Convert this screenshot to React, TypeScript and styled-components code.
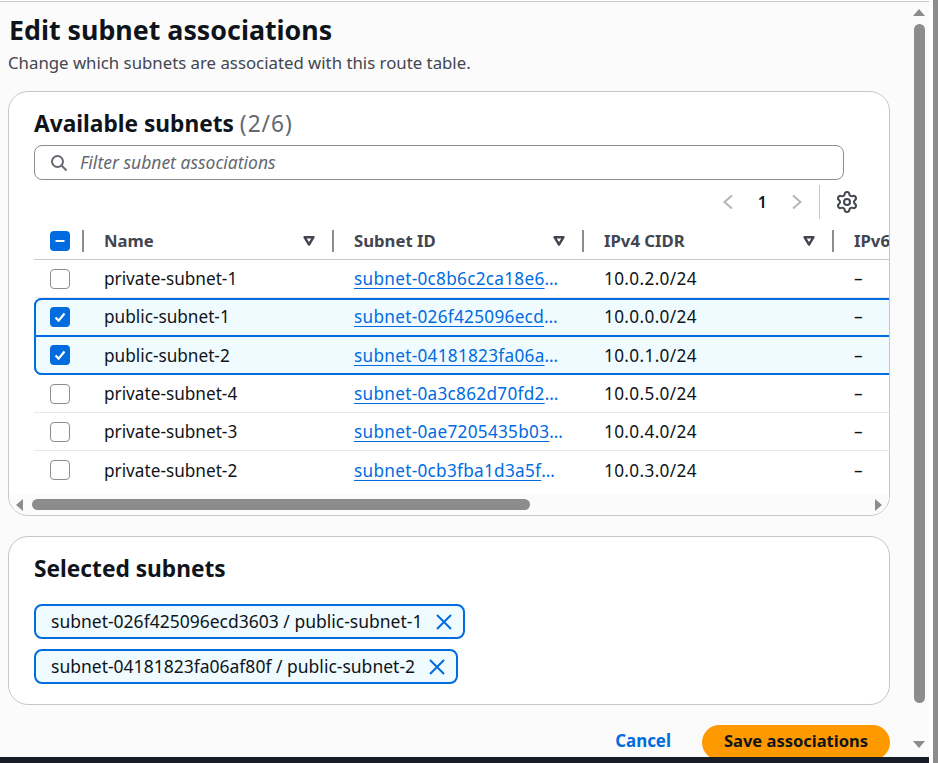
import styled, { createGlobalStyle } from 'styled-components';
import { Settings } from 'lucide-react';

const SUBNETS = [
  { name: 'private-subnet-1', id: 'subnet-0c8b6c2ca18e6d5f1', cidr: '10.0.2.0/24' },
  { name: 'public-subnet-1', id: 'subnet-026f425096ecd3603', cidr: '10.0.0.0/24', selected: true, edge: 'top' },
  { name: 'public-subnet-2', id: 'subnet-04181823fa06af80f', cidr: '10.0.1.0/24', selected: true, edge: 'bottom' },
  { name: 'private-subnet-4', id: 'subnet-0a3c862d70fd2b9e4', cidr: '10.0.5.0/24' },
  { name: 'private-subnet-3', id: 'subnet-0ae7205435b03c1a7', cidr: '10.0.4.0/24' },
  { name: 'private-subnet-2', id: 'subnet-0cb3fba1d3a5f7e82', cidr: '10.0.3.0/24', last: true },
];

const COLUMNS = ['Name', 'Subnet ID', 'IPv4 CIDR', 'IPv6'];

const TOKENS = [
  'subnet-026f425096ecd3603 / public-subnet-1',
  'subnet-04181823fa06af80f / public-subnet-2',
];

function SortIcon() {
  return (
    <svg width="14" height="12" viewBox="0 0 14 12">
      <path d="M2.5 2.2h9L7 9.5z" fill="none" stroke="#424650" strokeWidth="2.4" strokeLinejoin="round" />
    </svg>
  );
}

function Chevron({ flip }: { flip?: boolean }) {
  return (
    <svg width="12" height="16" viewBox="0 0 12 16">
      <path d={flip ? 'M2 1.5 9.5 8 2 14.5' : 'M10 1.5 2.5 8 10 14.5'} fill="none" stroke="#b4b4bb" strokeWidth="2" />
    </svg>
  );
}

function Check({ indeterminate, checked }: { indeterminate?: boolean; checked?: boolean }) {
  return (
    <CheckBox $on={checked || indeterminate}>
      {checked && (
        <svg width="14" height="14" viewBox="0 0 14 14">
          <path d="M2.5 7.5 5.6 10.6 11.5 3.5" fill="none" stroke="#fff" strokeWidth="2.2" />
        </svg>
      )}
      {indeterminate && (
        <svg width="14" height="14" viewBox="0 0 14 14">
          <path d="M2.5 7h9" fill="none" stroke="#fff" strokeWidth="2" />
        </svg>
      )}
    </CheckBox>
  );
}

function App() {
  return (
    <Window>
      <GlobalStyle />
      <Main>
        <ScrollArea>
          <Content>
            <Title>Edit subnet associations</Title>
            <Subtitle>Change which subnets are associated with this route table.</Subtitle>

            <Card>
              <CardHead>
                <CardTitle>
                  Available subnets <Count>(2/6)</Count>
                </CardTitle>
                <Filter>
                  <svg width="18" height="18" viewBox="0 0 18 18">
                    <circle cx="7.5" cy="7.5" r="5.5" fill="none" stroke="#656871" strokeWidth="2" />
                    <path d="m11.5 11.5 5 5" fill="none" stroke="#656871" strokeWidth="2" />
                  </svg>
                  <FilterText>Filter subnet associations</FilterText>
                </Filter>
                <Tools>
                  <Pager>
                    <Chevron />
                    <PageNumber>1</PageNumber>
                    <Chevron flip />
                  </Pager>
                  <ToolDivider />
                  <Settings size={24} color="#424650" strokeWidth={2} />
                </Tools>
              </CardHead>

              <Table>
                <HeaderRow>
                  <CheckCell>
                    <Check indeterminate />
                    <HeadDivider />
                  </CheckCell>
                  {COLUMNS.map((col, i) => (
                    <HeadCell key={col}>
                      <HeadLabel>{col}</HeadLabel>
                      {i < 3 && <SortIcon />}
                      {i < 3 && <HeadDivider />}
                    </HeadCell>
                  ))}
                </HeaderRow>
                {SUBNETS.map((row) => (
                  <Row key={row.name} $selected={row.selected} $edge={row.edge} $last={row.last}>
                    <CheckCell>
                      <Check checked={row.selected} />
                    </CheckCell>
                    <Cell>{row.name}</Cell>
                    <IdCell>
                      <IdLink>{row.id}</IdLink>
                    </IdCell>
                    <CidrCell>{row.cidr}</CidrCell>
                    <Cell>–</Cell>
                  </Row>
                ))}
              </Table>

              <HScroll>
                <ArrowLeft />
                <HThumb />
                <ArrowRight />
              </HScroll>
            </Card>

            <SelectedCard>
              <CardTitle>Selected subnets</CardTitle>
              <TokenList>
                {TOKENS.map((token) => (
                  <Token key={token}>
                    <TokenText>{token}</TokenText>
                    <svg width="18" height="18" viewBox="0 0 18 18">
                      <path d="m2 2 14 14M16 2 2 16" fill="none" stroke="#006ce0" strokeWidth="2" />
                    </svg>
                  </Token>
                ))}
              </TokenList>
            </SelectedCard>

            <Actions>
              <Cancel>Cancel</Cancel>
              <Save>Save associations</Save>
            </Actions>
          </Content>
          <VScroll>
            <ArrowUp />
            <VThumb />
            <ArrowDown />
          </VScroll>
        </ScrollArea>
        <DarkBar />
      </Main>
      <Gutter />
      <Strip />
    </Window>
  );
}

export default App;

const GlobalStyle = createGlobalStyle`
  html, body {
    margin: 0;
    padding: 0;
    background: #fff;
    overflow: hidden;
  }
  * {
    box-sizing: border-box;
  }
`

const Window = styled.div`
  display: flex;
  width: 938px;
  height: 763px;
  overflow: hidden;
  font-family: "Noto Sans", "Open Sans", Arial, sans-serif;
  color: #0f141a;
`

const Main = styled.div`
  width: 929px;
  margin-top: 1px;
  display: flex;
  flex-direction: column;
  border-top: 1px solid #c6c6cd;
  background: #fbfbfb;
`

const ScrollArea = styled.div`
  flex: 1;
  min-height: 0;
  display: flex;
  overflow: hidden;
`

const Content = styled.div`
  width: 909px;
  padding: 0 19px 0 8px;
`

const Title = styled.h1`
  margin: 11px 0 0 1px;
  font-size: 26.8px;
  line-height: 34px;
  font-weight: 700;
`

const Subtitle = styled.p`
  margin: 4px 0 0;
  font-size: 16.8px;
  line-height: 24px;
  color: #424650;
`

const Card = styled.section`
  margin-top: 16px;
  height: 425px;
  background: #fff;
  border: 1px solid #c6c6cd;
  border-radius: 20px;
  overflow: hidden;
`

const CardHead = styled.div`
  padding: 16px 45px 0 25px;
`

const CardTitle = styled.h2`
  margin: 0;
  font-size: 22.7px;
  line-height: 32px;
  font-weight: 700;
`

const Count = styled.span`
  font-weight: 400;
  letter-spacing: 1px;
  color: #656871;
`

const Filter = styled.div`
  margin-top: 5px;
  height: 35px;
  display: flex;
  align-items: center;
  gap: 12px;
  padding: 0 0 0 15px;
  border: 1px solid #8c8c94;
  border-radius: 8px;
  background: #fff;
`

const FilterText = styled.span`
  font-size: 17.5px;
  font-style: italic;
  color: #656871;
  margin-bottom: 2px;
`

const Tools = styled.div`
  height: 42px;
  margin-right: -15px;
  display: flex;
  align-items: center;
  justify-content: flex-end;
  padding-top: 1px;
`

const Pager = styled.div`
  display: flex;
  align-items: center;
  gap: 24px;
  margin-right: 16px;
`

const PageNumber = styled.span`
  font-size: 16px;
  font-weight: 600;
`

const ToolDivider = styled.div`
  width: 1px;
  height: 34px;
  margin-right: 15px;
  background: #c6c6cd;
`

const Table = styled.div`
  padding: 0 0 6px 25px;
  overflow: hidden;
`

const HeaderRow = styled.div`
  display: grid;
  grid-template-columns: 50px repeat(4, 250px);
  height: 38px;
  align-items: center;
  border-bottom: 1px solid #c6c6cd;
`

const Row = styled.div<{ $selected?: boolean; $edge?: string; $last?: boolean }>`
  display: grid;
  grid-template-columns: 50px repeat(4, 250px);
  height: ${(p) => (p.$edge === 'bottom' ? '39px' : '38px')};
  align-items: center;
  font-size: 17.2px;
  border-bottom: ${(p) => (p.$last || p.$selected ? 'none' : '1px solid #e8e8ec')};
  ${(p) => p.$selected && 'background: #f0fbff; margin-right: -4px; padding-bottom: 1px;'}
  ${(p) =>
    p.$edge === 'top' &&
    `
    border-top-left-radius: 8px;
    box-shadow: inset 0 2px 0 #006ce0, inset 2px 0 0 #006ce0, inset 0 -1px 0 #006ce0;
  `}
  ${(p) =>
    p.$edge === 'bottom' &&
    `
    border-bottom-left-radius: 8px;
    box-shadow: inset 0 -2px 0 #006ce0, inset 2px 0 0 #006ce0, inset 0 1px 0 #006ce0;
  `}
`

const CheckCell = styled.div`
  position: relative;
  display: flex;
  align-items: center;
  height: 100%;
  padding-left: 16px;
`

const CheckBox = styled.span<{ $on?: boolean }>`
  width: 20px;
  height: 20px;
  display: flex;
  align-items: center;
  justify-content: center;
  border-radius: 4px;
  border: ${(p) => (p.$on ? 'none' : '1.5px solid #8c8c94')};
  background: ${(p) => (p.$on ? '#006ce0' : '#fff')};
`

const HeadCell = styled.div`
  position: relative;
  display: flex;
  align-items: center;
  height: 100%;
  padding: 0 18px 0 20px;
`

const HeadLabel = styled.span`
  flex: 1;
  font-size: 16.7px;
  font-weight: 700;
  color: #424650;
  white-space: nowrap;
`

const HeadDivider = styled.span`
  position: absolute;
  right: 0;
  top: 8px;
  width: 2px;
  height: 22px;
  background: #8c8c94;
`

const Cell = styled.div`
  padding: 0 20px;
  min-width: 0;
  white-space: nowrap;
  overflow: hidden;
  text-overflow: ellipsis;
`

const IdCell = styled(Cell)`
  letter-spacing: 0.28px;
  color: #006ce0;
`

const CidrCell = styled(Cell)`
  letter-spacing: 0.35px;
`

const IdLink = styled.span`
  color: #006ce0;
  text-decoration: underline;
  text-underline-offset: 3px;
`

const HScroll = styled.div`
  height: 19px;
  display: flex;
  align-items: center;
  padding: 0 7px;
  background: #fbfbfb;
`

const HThumb = styled.div`
  width: 498px;
  height: 11px;
  margin-left: 9px;
  border-radius: 6px;
  background: #8c8c8c;
`

const ArrowLeft = styled.span`
  width: 0;
  height: 0;
  border-style: solid;
  border-width: 6.5px 7px 6.5px 0;
  border-color: transparent #8c8c8c transparent transparent;
`

const ArrowRight = styled.span`
  width: 0;
  height: 0;
  margin-left: auto;
  border-style: solid;
  border-width: 6.5px 0 6.5px 7px;
  border-color: transparent transparent transparent #8c8c8c;
`

const SelectedCard = styled.section`
  margin-top: 20px;
  height: 169px;
  padding: 16px 25px 0;
  background: #fff;
  border: 1px solid #c6c6cd;
  border-radius: 20px;
`

const TokenList = styled.div`
  margin-top: 19px;
  display: flex;
  flex-direction: column;
  align-items: flex-start;
  gap: 10px;
`

const Token = styled.div`
  height: 35px;
  display: flex;
  align-items: center;
  gap: 13px;
  padding: 0 10px 0 15px;
  white-space: nowrap;
  background: #f0fbff;
  border: 2px solid #006ce0;
  border-radius: 8px;
`

const TokenText = styled.span`
  font-size: 17.5px;
  margin-bottom: 2px;
`

const Actions = styled.div`
  margin-top: 20px;
  display: flex;
  align-items: center;
  justify-content: flex-end;
  gap: 31px;
`

const Cancel = styled.span`
  font-size: 16.9px;
  font-weight: 700;
  color: #006ce0;
  margin-bottom: 4px;
`

const Save = styled.div`
  width: 188px;
  height: 35px;
  padding-bottom: 4px;
  display: flex;
  align-items: center;
  justify-content: center;
  flex-shrink: 0;
  font-size: 16.5px;
  font-weight: 700;
  background: #ff9900;
  border-radius: 20px;
`

const VScroll = styled.div`
  width: 20px;
  display: flex;
  flex-direction: column;
  align-items: center;
  padding-top: 7px;
`

const VThumb = styled.div`
  width: 11px;
  height: 679px;
  margin-top: 8px;
  border-radius: 6px;
  background: #8c8c8c;
`

const ArrowUp = styled.span`
  width: 0;
  height: 0;
  border-style: solid;
  border-width: 0 6.5px 7px;
  border-color: transparent transparent #8c8c8c;
`

const ArrowDown = styled.span`
  width: 0;
  height: 0;
  margin-top: 38px;
  border-style: solid;
  border-width: 7px 6.5px 0;
  border-color: #8c8c8c transparent transparent;
`

const DarkBar = styled.div`
  height: 6px;
  flex-shrink: 0;
  background: #161d26;
`

const Gutter = styled.div`
  width: 4px;
  background: #fff;
`

const Strip = styled.div`
  width: 5px;
  background: #8c8c8c;
`
